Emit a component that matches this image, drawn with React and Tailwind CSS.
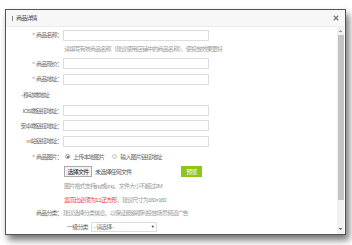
const font = { fontFamily: '"Liberation Sans", "Noto Sans CJK SC", sans-serif' };

function Label({ star, children }) {
  return (
    <div className="w-[56px] shrink-0 text-right text-[#666] whitespace-nowrap">
      {star && <span className="text-[#ec5b5b] mr-[2px]">*</span>}
      {children}
    </div>
  );
}

function Input() {
  return <div className="ml-[1px] w-[146px] h-[11px] border border-[#ddd] bg-white" />;
}

function Radio({ checked }) {
  return (
    <span className={checked ? 'flex shrink-0 w-[5px] h-[5px] rounded-full border border-[#999] bg-white items-center justify-center' : 'block shrink-0 w-[5px] h-[5px] rounded-full border border-[#ccc] bg-[#eee]'}>
      {checked && <span className="block w-[2px] h-[2px] rounded-full bg-[#555]" />}
    </span>
  );
}

export default function App() {
  return (
    <div className="w-[352px] h-[245px] bg-white pt-[9px] pl-[5px] overflow-hidden text-[6px] leading-none tracking-[-0.8px]" style={font}>
      <div className="w-[341px] h-[226px] border border-[#555] bg-white flex flex-col shadow-[3px_5px_7px_rgba(0,0,0,0.55)]">
        <div className="h-[17px] shrink-0 bg-[#f7f7f7] border-b border-[#ececec] flex items-center justify-between pl-[6px] pr-[6px]">
          <div className="flex items-center gap-[3px] text-[#444]">
            <span className="w-[1px] h-[5px] bg-[#888]" />
            <span>商品详情</span>
          </div>
          <svg width="6" height="6" viewBox="0 0 6 6">
            <path d="M0.8 0.8 L5.2 5.2 M5.2 0.8 L0.8 5.2" stroke="#777" strokeWidth="1.3" />
          </svg>
        </div>
        <div className="flex flex-1 min-h-0">
          <div className="flex-1 pt-[1px]">
            <div className="flex items-center h-[14px]">
              <Label star>商品名称：</Label>
              <Input />
            </div>
            <div className="flex items-center h-[14px] pl-[58px] text-[#999] whitespace-nowrap">
              请填写有效商品名称（建议使用店铺中的商品名称），使投放效果更好
            </div>
            <div className="flex items-center h-[15px]">
              <Label star>商品现价：</Label>
              <Input />
            </div>
            <div className="flex items-center h-[16px]">
              <Label star>商品地址：</Label>
              <Input />
            </div>
            <div className="flex items-center h-[16px] pl-[15px] text-[#666]">- 移动端地址</div>
            <div className="flex items-center h-[15px]">
              <Label>IOS端链接地址：</Label>
              <Input />
            </div>
            <div className="flex items-center h-[15px]">
              <Label>安卓端链接地址：</Label>
              <Input />
            </div>
            <div className="flex items-center h-[16px]">
              <Label>m站链接地址：</Label>
              <Input />
            </div>
            <div className="flex items-center h-[15px]">
              <Label star>商品图片：</Label>
              <div className="flex items-center ml-[3px] text-[#666]">
                <Radio checked />
                <span className="ml-[3px]">上传本地图片</span>
                <span className="ml-[8px]"><Radio /></span>
                <span className="ml-[3px]">输入图片链接地址</span>
              </div>
            </div>
            <div className="flex items-center h-[15px] pl-[58px]">
              <div className="w-[28px] h-[11px] border border-[#aaa] bg-[#f3f3f3] text-[#222] flex items-center justify-center">选择文件</div>
              <span className="ml-[3px] w-[80px] text-[#555]">未选择任何文件</span>
              <div className="ml-[6px] w-[21px] h-[11px] bg-[#8cc61c] text-white flex items-center justify-center">预览</div>
            </div>
            <div className="flex items-center h-[14px] pl-[58px] text-[#999] whitespace-nowrap">
              图片格式支持jpg或png，文件大小不超过2M
            </div>
            <div className="flex items-center h-[13px] pl-[58px] text-[#999] whitespace-nowrap">
              <span className="text-[#e83a3a]">宽高比必须为1:1正方形</span>，建议尺寸为160×160
            </div>
            <div className="flex items-center h-[14px] whitespace-nowrap">
              <Label>商品分类：</Label>
              <span className="ml-[1px] text-[#999]">建议选择分类信息，以保证能够顺利投放场景频道广告</span>
            </div>
            <div className="flex items-center h-[14px] pl-[61px]">
              <span className="text-[#666]">一级分类</span>
              <div className="ml-[3px] w-[66px] h-[10px] border border-[#ddd] flex items-center justify-between px-[2px] text-[#777]">
                <span>- 请选择 -</span>
                <span className="text-[#333] text-[4px]">▼</span>
              </div>
            </div>
          </div>
          <div className="w-[7px] mr-[1px] bg-[#f1f1f1] flex flex-col items-center">
            <svg width="5" height="4" viewBox="0 0 5 4" className="mt-[2px]">
              <path d="M0.5 3 L2.5 1 L4.5 3 Z" fill="#999" />
            </svg>
            <div className="mt-[2px] w-[6px] h-[165px] bg-[#c4c4c4]" />
            <div className="flex-1" />
            <svg width="5" height="4" viewBox="0 0 5 4" className="mb-[3px]">
              <path d="M0.5 1 L2.5 3 L4.5 1 Z" fill="#666" />
            </svg>
          </div>
        </div>
      </div>
    </div>
  );
}
